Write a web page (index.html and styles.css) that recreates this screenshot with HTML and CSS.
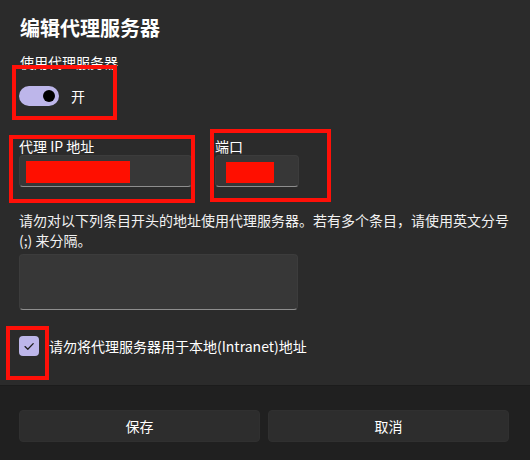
FILE: index.html
```html
<!DOCTYPE html>
<html lang="zh-CN">
<head>
<meta charset="utf-8">
<title>编辑代理服务器</title>
<link rel="stylesheet" href="styles.css">
</head>
<body>
<div class="dialog">
  <div class="content">
    <h1 class="title">编辑代理服务器</h1>
    <div class="label">使用代理服务器</div>
    <div class="toggle-row">
      <span class="toggle"><span class="knob"></span></span>
      <span class="toggle-text">开</span>
    </div>
    <div class="fields">
      <div class="field field-ip">
        <div class="field-label">代理 IP 地址</div>
        <div class="input input-ip"><span class="redact redact-ip"></span></div>
      </div>
      <div class="field field-port">
        <div class="field-label">端口</div>
        <div class="input input-port"><span class="redact redact-port"></span></div>
      </div>
    </div>
    <p class="desc">请勿对以下列条目开头的地址使用代理服务器。若有多个条目，请使用英文分号 (;) 来分隔。</p>
    <div class="textarea"></div>
    <div class="check-row">
      <span class="checkbox">
        <svg width="20" height="20" viewBox="0 0 20 20"><path d="M6 10.6 L8.8 13.2 L14.2 7.6" fill="none" stroke="#1c1c1c" stroke-width="1.3" stroke-linecap="round" stroke-linejoin="round"/></svg>
      </span>
      <span class="check-text">请勿将代理服务器用于本地(Intranet)地址</span>
    </div>
  </div>
  <div class="footer">
    <button class="btn">保存</button>
    <button class="btn">取消</button>
  </div>
  <div class="mark mark-toggle"></div>
  <div class="mark mark-ip"></div>
  <div class="mark mark-port"></div>
  <div class="mark mark-check"></div>
</div>
</body>
</html>
```
FILE: styles.css
```css
* { box-sizing: border-box; }
html, body {
  margin: 0;
  padding: 0;
  background: #202020;
}
body {
  font-family: "Noto Sans CJK SC", "Noto Sans", sans-serif;
  color: #ffffff;
  width: 530px;
  height: 460px;
  overflow: hidden;
}
.dialog {
  position: relative;
  width: 530px;
  height: 460px;
}
.content {
  background: #2b2b2b;
  height: 385px;
  padding: 14px 20px 0 19px;
}
.title {
  margin: 0 0 0 1px;
  font-size: 20px;
  line-height: 28px;
  font-weight: 600;
}
.label {
  margin-top: 10px;
  font-size: 14px;
  line-height: 20px;
  padding-left: 1px;
}
.toggle-row {
  margin-top: 14px;
  display: flex;
  align-items: center;
  height: 20px;
}
.toggle {
  width: 40px;
  height: 20px;
  border-radius: 10px;
  background: #bdb6ea;
  display: flex;
  align-items: center;
  justify-content: flex-end;
  padding-right: 4px;
}
.knob {
  width: 12px;
  height: 12px;
  border-radius: 50%;
  background: #000;
}
.toggle-text {
  margin-left: 12px;
  font-size: 14px;
  line-height: 20px;
}
.fields {
  margin-top: 31px;
  display: flex;
  gap: 23px;
}
.field-label {
  font-size: 14px;
  line-height: 18px;
}
.input {
  height: 32px;
  background: #373737;
  border: 1px solid #3c3c3c;
  border-bottom: 1px solid #8e8e8e;
  border-radius: 4px;
  padding: 5px 0 0 6px;
}
.input-ip { width: 173px; }
.input-port { width: 84px; padding-top: 6px; padding-left: 10px; }
.redact {
  display: block;
  background: #ff0f00;
}
.redact-ip { width: 104px; height: 22px; }
.redact-port { width: 48px; height: 21px; }
.desc {
  margin: 23px -8px 0 0;
  font-size: 14px;
  line-height: 20px;
  color: #f2f2f2;
}
.textarea {
  margin-top: 4px;
  width: 279px;
  height: 56px;
  background: #373737;
  border: 1px solid #3c3c3c;
  border-bottom: 1px solid #8e8e8e;
  border-radius: 4px;
}
.check-row {
  margin-top: 26px;
  display: flex;
  align-items: center;
  height: 20px;
}
.checkbox {
  width: 20px;
  height: 20px;
  border-radius: 4px;
  background: #bdb6ea;
  display: block;
}
.checkbox svg { display: block; }
.check-text {
  margin-left: 10px;
  font-size: 14px;
  line-height: 20px;
}
.footer {
  border-top: 1px solid #1c1c1c;
  padding: 24px 21px 0 19px;
  display: flex;
  gap: 8px;
}
.btn {
  flex: 1;
  height: 32px;
  background: #2d2d2d;
  border: 1px solid #303030;
  border-radius: 4px;
  color: #ffffff;
  font-family: "Noto Sans CJK SC", "Noto Sans", sans-serif;
  font-size: 14px;
  padding: 0;
}
.mark {
  position: absolute;
  border: 4px solid #ff1008;
}
.mark-toggle { left: 12px; top: 65px; width: 105px; height: 55px; }
.mark-ip { left: 9px; top: 135px; width: 186px; height: 68px; }
.mark-port { left: 210px; top: 129px; width: 121px; height: 73px; }
.mark-check { left: 6px; top: 326px; width: 43px; height: 54px; }
```
